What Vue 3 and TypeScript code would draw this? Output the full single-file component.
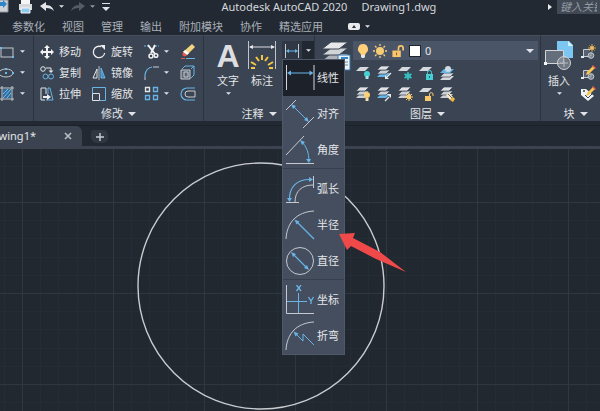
<script setup lang="ts">
import { ref } from 'vue'

interface Tool {
  icon: string
  label: string
}

const menus: string[] = ['参数化', '视图', '管理', '输出', '附加模块', '协作', '精选应用']

const drawTools: Tool[] = [
  { icon: 'rect', label: '矩形' },
  { icon: 'ellipse', label: '椭圆' },
  { icon: 'hatch', label: '图案填充' },
]

const modifyTools: Tool[][] = [
  [
    { icon: 'move', label: '移动' },
    { icon: 'copy', label: '复制' },
    { icon: 'stretch', label: '拉伸' },
  ],
  [
    { icon: 'rotate', label: '旋转' },
    { icon: 'mirror', label: '镜像' },
    { icon: 'scale', label: '缩放' },
  ],
]

const splitTools: Tool[] = [
  { icon: 'trim', label: '修剪' },
  { icon: 'fillet', label: '圆角' },
  { icon: 'array', label: '阵列' },
]

const editTools: Tool[] = [
  { icon: 'erase', label: '删除' },
  { icon: 'explode', label: '分解' },
  { icon: 'offset', label: '偏移' },
]

const layerTools: Tool[] = [
  { icon: 'l-off', label: '关' },
  { icon: 'l-iso', label: '隔离' },
  { icon: 'l-freeze', label: '冻结' },
  { icon: 'l-lock', label: '锁定' },
  { icon: 'l-current', label: '置为当前' },
  { icon: 'l-on', label: '打开所有图层' },
  { icon: 'l-uniso', label: '取消隔离' },
  { icon: 'l-thaw', label: '解冻' },
  { icon: 'l-unlock', label: '解锁' },
  { icon: 'l-match', label: '匹配图层' },
]

const blockTools: Tool[] = [
  { icon: 'b-create', label: '创建' },
  { icon: 'b-edit', label: '编辑' },
  { icon: 'b-attr', label: '编辑属性' },
]

const dimensionGroups: Tool[][] = [
  [
    { icon: 'd-linear', label: '线性' },
    { icon: 'd-aligned', label: '对齐' },
    { icon: 'd-angular', label: '角度' },
  ],
  [
    { icon: 'd-arc', label: '弧长' },
    { icon: 'd-radius', label: '半径' },
    { icon: 'd-diameter', label: '直径' },
  ],
  [
    { icon: 'd-ordinate', label: '坐标' },
    { icon: 'd-jogged', label: '折弯' },
  ],
]

const selected = ref('线性')
const menuOpen = ref(true)
const layer = ref('0')
const query = ref('')

function choose(label: string) {
  selected.value = label
  menuOpen.value = false
}
</script>

<template>
  <div class="app">
    <svg class="sprite" aria-hidden="true">
      <symbol id="caret" viewBox="0 0 8 4"><path d="M0 0h8L4 4z" fill="#dfe2e6" /></symbol>

      <symbol id="export" viewBox="0 0 10 14">
        <path d="M0 0h8v12H0" fill="#cfd3d8" stroke="#8d949d" /><path d="M0 2h3V0l4 4-4 4V6H0z" fill="#2e86c8" />
      </symbol>
      <symbol id="print" viewBox="0 0 15 14">
        <path d="M3 0h9v4H3z" fill="#f5f5f5" /><path d="M1 4h13v6H1z" fill="#d6d9dc" /><path d="M3 8h9v5H3z" fill="#8ecbee" stroke="#f4f6f8" />
      </symbol>
      <symbol id="undo" viewBox="0 0 14 10">
        <path d="M6 0v3c5 0 7 3 8 6-2-2-4-3-8-3v3L0 4z" fill="currentColor" />
      </symbol>

      <symbol id="rect" viewBox="0 0 16 16">
        <rect x="1" y="4" width="12" height="9" fill="none" stroke="#c3c8ce" /><path d="M0 3h2v2H0zM12 12h2v2h-2z" fill="#6db9ec" />
      </symbol>
      <symbol id="ellipse" viewBox="0 0 16 16">
        <ellipse cx="6" cy="8" rx="7" ry="4" fill="none" stroke="#c3c8ce" /><path d="M5 7h2v2H5zM12 7h2v2h-2zM5 3h2v2H5z" fill="#6db9ec" />
      </symbol>
      <symbol id="hatch" viewBox="0 0 16 16">
        <path d="M3 3h8v9H3z" fill="#2f6d9f" /><path d="M3 8l5-5M3 12l8-9M7 12l4-5" stroke="#79c0ef" />
        <path d="M2 0v15M12 0v15M0 2h14M0 13h14" stroke="#c3c8ce" />
      </symbol>

      <symbol id="move" viewBox="0 0 14 14">
        <path d="M7 2v10M2 7h10" stroke="#f1f2f3" stroke-width="2" />
        <path d="M7 0l3 3H4zM7 14l3-3H4zM0 7l3-3v6zM14 7l-3-3v6z" fill="#f1f2f3" />
      </symbol>
      <symbol id="copy" viewBox="0 0 14 14">
        <circle cx="3" cy="3" r="2.3" fill="none" stroke="#e4e6e8" />
        <path d="M6 2h5v3" fill="none" stroke="#e4e6e8" /><path d="M8.500 4.500h5L11 7z" fill="#e4e6e8" />
        <circle cx="5.500" cy="10.500" r="2.500" fill="none" stroke="#69b4e6" /><circle cx="11" cy="10.500" r="2.500" fill="none" stroke="#69b4e6" />
      </symbol>
      <symbol id="stretch" viewBox="0 0 14 14">
        <path d="M6 7V1H1v12h4" fill="none" stroke="#dfe2e5" />
        <path d="M8 7V1h2l3 12H6" fill="none" stroke="#69b4e6" />
        <path d="M3 9h4V7l4 3-4 3v-2H3z" fill="#eceef0" />
      </symbol>
      <symbol id="rotate" viewBox="0 0 14 14">
        <path d="M9 1.600A5.700 5.700 0 1 0 12.700 8" fill="none" stroke="#eceef0" stroke-width="1.300" />
        <path d="M8 0h5v5z" fill="#eceef0" />
      </symbol>
      <symbol id="mirror" viewBox="0 0 14 14">
        <path d="M5 3v9H1z" fill="none" stroke="#e4e6e8" /><path d="M9 2l4 10H9z" fill="#3d8dc4" stroke="#69b4e6" /><path d="M7 0v14" stroke="#b4bac1" />
      </symbol>
      <symbol id="scale" viewBox="0 0 14 14">
        <path d="M.5 6V.5h13v13H8" fill="none" stroke="#69b4e6" /><path d="M.5 6.500h7v7h-7z" fill="none" stroke="#dfe2e5" />
      </symbol>
      <symbol id="trim" viewBox="0 0 16 16">
        <path d="M0 2h5M11 2h4" stroke="#69b4e6" stroke-dasharray="2 1" />
        <path d="M4 1l7 9M11 1L7 9" stroke="#f1f2f3" stroke-width="2" />
        <circle cx="7" cy="12" r="2" fill="none" stroke="#f1f2f3" stroke-width="1.500" /><circle cx="12" cy="11.500" r="1.800" fill="none" stroke="#f1f2f3" stroke-width="1.500" />
      </symbol>
      <symbol id="fillet" viewBox="0 0 16 16">
        <path d="M1 12V10Q2 3 8 2" fill="none" stroke="#69b4e6" stroke-width="1.200" /><path d="M9 2h6M1 12v3" stroke="#c8ccd1" />
      </symbol>
      <symbol id="array" viewBox="0 0 16 16">
        <path d="M1.500 1.500h4v4h-4z" fill="none" stroke="#e4e6e8" stroke-width="1.300" />
        <path d="M9.500 1.500h4v4h-4zM1.500 9.500h4v4h-4zM9.500 9.500h4v4h-4z" fill="none" stroke="#69b4e6" stroke-width="1.300" />
      </symbol>
      <symbol id="erase" viewBox="0 0 16 16">
        <path d="M12 0l3 3-8 8-4-3z" fill="#f4d583" /><path d="M5 6l4 3-2 2-4-3z" fill="#fff" /><path d="M3 8l4 3c-2 3-6 1-4-3z" fill="#e65b52" />
        <path d="M1 14.500h4" stroke="#e65b52" /><path d="M6 14.500h9" stroke="#69b4e6" />
      </symbol>
      <symbol id="explode" viewBox="0 0 16 16">
        <path d="M1 5h9v9H1zM4 7h4v5H4z" fill="#5c6675" stroke="#c8ccd1" />
        <path d="M2 4l3-3h9v9l-3 3M11 4l3-3" fill="none" stroke="#69b4e6" />
      </symbol>
      <symbol id="offset" viewBox="0 0 16 16">
        <path d="M15 2H7a6 6 0 0 0 0 12h8" fill="none" stroke="#69b4e6" stroke-width="1.200" />
        <path d="M15 5H8a3 3 0 0 0 0 6h7z" fill="none" stroke="#c8ccd1" />
      </symbol>

      <symbol id="dimension" viewBox="0 0 30 30">
        <path d="M1.500 0v28M28.500 0v28" stroke="#c0c5cc" /><path d="M3 6h24" stroke="#d9dce0" />
        <path d="M2 6l4-2v4zM28 6l-4-2v4z" fill="#e6e8ea" />
        <path d="M15 14v5M9 16l3 4M21 16l-3 4M4 21l5 3M26 21l-5 3M4 27h4M22 27h4" stroke="#f6c544" stroke-width="2" />
      </symbol>
      <symbol id="dim-small" viewBox="0 0 16 16">
        <path d="M1.500 1v14M14.500 1v14" stroke="#c5cad0" /><path d="M3 8h10" stroke="#69b4e6" /><path d="M2 8l3-2v4zM14 8l-3-2v4z" fill="#69b4e6" />
      </symbol>
      <symbol id="layers" viewBox="0 0 30 30">
        <path d="M1 20L10 13h17l-9 7z" fill="#aeb3b9" /><path d="M1 14L10 7h17l-9 7z" fill="#d1d4d7" stroke="#3d4553" />
        <path d="M1 8L10 1h17l-9 7z" fill="#e7e8e9" stroke="#3d4553" />
        <path d="M17 14h12v15H17z" fill="#edf3f7" stroke="#3578a9" /><path d="M20 17h7" stroke="#2f89cc" stroke-width="2" /><path d="M20 21h7M20 24h7" stroke="#75879a" />
      </symbol>

      <symbol id="bulb" viewBox="0 0 12 16">
        <path d="M6 1a5 5 0 0 0-3 9l1 2h4l1-2a5 5 0 0 0-3-9z" fill="#ffd079" /><path d="M4 12h4v2l-1 1H5l-1-1z" fill="#e4e6e8" />
      </symbol>
      <symbol id="sun" viewBox="0 0 14 14">
        <circle cx="7" cy="7" r="4" fill="#f8cc75" /><path d="M7 0v2M7 12v2M0 7h2M12 7h2M2 2l1.500 1.500M10.500 10.500L12 12M12 2l-1.500 1.500M2 12l1.500-1.500" stroke="#f8cc75" stroke-width="1.300" />
      </symbol>
      <symbol id="unlock" viewBox="0 0 14 15">
        <path d="M1 7h9v7H1z" fill="#fac66a" /><path d="M7.500 7V4.500a2.500 2.500 0 0 1 5 0V7" fill="none" stroke="#fac66a" stroke-width="1.800" /><path d="M5 9h1v3H5z" fill="#6b5633" />
      </symbol>

      <symbol id="sheet" viewBox="0 0 16 16"><path d="M1 6l4-4h9l-4 4z" fill="#d5d8dc" /></symbol>
      <symbol id="stack" viewBox="0 0 16 16">
        <path d="M1 12l4-4h9l-4 4z" fill="#cdd1d6" /><path d="M1 9l4-4h9l-4 4z" fill="#cdd1d6" stroke="#3b4452" stroke-width=".7" /><path d="M1 5l4-4h9l-4 4z" fill="#dfe1e4" stroke="#3b4452" stroke-width=".7" />
      </symbol>
      <symbol id="stack-blue" viewBox="0 0 16 16">
        <path d="M1 12l4-4h9l-4 4z" fill="#65b5e7" /><path d="M1 9l4-4h9l-4 4z" fill="#cdd1d6" stroke="#3b4452" stroke-width=".7" /><path d="M1 5l4-4h9l-4 4z" fill="#dfe1e4" stroke="#3b4452" stroke-width=".7" />
      </symbol>
      <symbol id="l-off" viewBox="0 0 16 16">
        <use href="#sheet" /><circle cx="12" cy="9" r="3" fill="#45d0d3" /><path d="M10.500 11h3v3h-3z" fill="#a8e6e6" />
      </symbol>
      <symbol id="l-iso" viewBox="0 0 16 16"><use href="#stack-blue" /><path d="M15 8l-4 4" stroke="#e6e8ea" stroke-width="1.300" /><path d="M9 10v4h4z" fill="#e6e8ea" /></symbol>
      <symbol id="l-freeze" viewBox="0 0 16 16">
        <use href="#sheet" /><path d="M11 7v8M7.500 9l7 4M14.500 9l-7 4" stroke="#35bfc0" stroke-width="1.500" /><circle cx="11" cy="11" r="2.300" fill="none" stroke="#35bfc0" />
      </symbol>
      <symbol id="l-lock" viewBox="0 0 16 16">
        <use href="#sheet" /><path d="M8 9h7v6H8z" fill="#45d0d3" /><path d="M9.500 9V7.500a2 2 0 0 1 4 0V9" fill="none" stroke="#45d0d3" /><path d="M11 11h1v2h-1z" fill="#1e6568" />
      </symbol>
      <symbol id="l-current" viewBox="0 0 16 16">
        <path d="M1 15l4-4h10l-4 4z" fill="#d5d8dc" /><path d="M1 12l4-4h10l-4 4z" fill="#d5d8dc" stroke="#3b4452" stroke-width=".7" /><path d="M1 8l4-4h10l-4 4z" fill="#65b5e7" /><circle cx="9" cy="4" r="3" fill="#d0dbe5" />
      </symbol>
      <symbol id="l-on" viewBox="0 0 16 16"><use href="#stack" /><circle cx="12" cy="9" r="3" fill="#fbd174" /><path d="M10.500 12h3v3h-3z" fill="#f2dfb5" /></symbol>
      <symbol id="l-uniso" viewBox="0 0 16 16"><use href="#stack-blue" /><path d="M9 15l4-4" stroke="#e6e8ea" stroke-width="1.300" /><path d="M11 8h4v4z" fill="#e6e8ea" /></symbol>
      <symbol id="l-thaw" viewBox="0 0 16 16">
        <use href="#stack" /><circle cx="12" cy="11" r="2.200" fill="#f9cd70" /><path d="M12 7v8M8 11h8M9 8l6 6M15 8l-6 6" stroke="#f9cd70" />
      </symbol>
      <symbol id="l-unlock" viewBox="0 0 16 16">
        <use href="#sheet" /><path d="M7 10h6v5H7z" fill="#fac66a" /><path d="M11.500 10V8a1.800 1.800 0 0 1 3.500 0v2" fill="none" stroke="#fac66a" />
      </symbol>
      <symbol id="l-match" viewBox="0 0 16 16"><use href="#stack" /><path d="M7 9l3-2 4 4-3 3z" fill="#f7ecd0" /><path d="M11 14l3-3 2 2-2 3z" fill="#f4b740" /><path d="M9 8l4 4" stroke="#7d6840" /></symbol>

      <symbol id="insert" viewBox="0 0 30 30">
        <path d="M13 0h12l4 4v13H13z" fill="#7cc6f2" /><path d="M24 0v5h5z" fill="#d7effc" />
        <path d="M1.500 9.500h18v13h-18z" fill="#656e7b" stroke="#d2d5d9" /><circle cx="20" cy="22" r="6.500" fill="#929aa5" fill-opacity=".6" stroke="#d2d5d9" />
        <path d="M20 18v8M16 22h8" stroke="#b7bcc3" /><path d="M0 21h3v3H0z" fill="#f5f5f5" />
      </symbol>
      <symbol id="b-base" viewBox="0 0 16 16">
        <path d="M10 5.500H3.500v7H8" fill="#566070" stroke="#c8ccd1" /><circle cx="11" cy="11.500" r="2.800" fill="#737c89" stroke="#c8ccd1" /><path d="M1 12h3v2H1z" fill="#e6e8ea" /><path d="M11 9v3H8.500" fill="none" stroke="#c8ccd1" stroke-width=".7" />
      </symbol>
      <symbol id="b-create" viewBox="0 0 16 16"><use href="#b-base" /><circle cx="12" cy="4" r="1.800" fill="#ffd36f" /><path d="M12 0v8M8 4h8M9.500 1.500l5 5M14.500 1.500l-5 5" stroke="#f7bc52" stroke-width=".8" /></symbol>
      <symbol id="pencil" viewBox="0 0 16 16"><path d="M13 1l2 2-6 6-3 1 1-3z" fill="#f6c650" /><path d="M13 0l3 3-1 1-3-3z" fill="#e95d4e" /></symbol>
      <symbol id="b-edit" viewBox="0 0 16 16"><use href="#b-base" /><use href="#pencil" /></symbol>
      <symbol id="b-attr" viewBox="0 0 16 16"><path d="M1 3h5l8 7-6 5-7-6z" fill="#f0f1f2" /><circle cx="4" cy="5" r="1" fill="#3b4452" /><path d="M5 9l3 3 5-5" fill="none" stroke="#3b4452" /><use href="#pencil" /></symbol>

      <symbol id="d-linear" viewBox="0 0 30 30">
        <path d="M1.500 2v25M29 2v25" stroke="#d3d6da" /><path d="M4 10h22" stroke="#69b4e6" /><path d="M2 10l4-2.500v5zM28.500 10l-4-2.500v5z" fill="#69b4e6" />
      </symbol>
      <symbol id="d-aligned" viewBox="0 0 30 30">
        <path d="M1 11L11 1M18 29l11-11" stroke="#c6cad0" /><path d="M8 7l14 14" stroke="#69b4e6" /><path d="M6 5l5 2-3 3zM24 23l-5-2 3-3z" fill="#69b4e6" />
      </symbol>
      <symbol id="d-angular" viewBox="0 0 30 30">
        <path d="M1 20L19 1M1 28.500h28" stroke="#c6cad0" /><path d="M17 7q7 7 7 19" fill="none" stroke="#69b4e6" /><path d="M15 5l5 2-3 3zM24 28l-3-4h5z" fill="#69b4e6" />
      </symbol>
      <symbol id="d-arc" viewBox="0 0 30 30">
        <path d="M28.500 2v12M1 28.500h13M10 28c0-11 7-17 18-17" fill="none" stroke="#c6cad0" /><path d="M4.500 26C4 13 12 5 26 5.500" fill="none" stroke="#69b4e6" stroke-width="1.200" /><path d="M28 5.500l-4-2.500v5zM4.500 28l-2.500-4h5z" fill="#69b4e6" />
      </symbol>
      <symbol id="d-radius" viewBox="0 0 30 30">
        <path d="M1 29C2 12 12 2 29 1" fill="none" stroke="#c6cad0" /><path d="M12 12l17 17" stroke="#69b4e6" stroke-width="1.200" /><path d="M9.500 9.500l5 2-3 3z" fill="#69b4e6" />
      </symbol>
      <symbol id="d-diameter" viewBox="0 0 30 30">
        <circle cx="15" cy="15" r="13.500" fill="none" stroke="#c6cad0" /><path d="M8 8l14 14" stroke="#69b4e6" stroke-width="1.200" /><path d="M6 6l5 2-3 3zM24 24l-5-2 3-3z" fill="#69b4e6" />
      </symbol>
      <symbol id="d-ordinate" viewBox="0 0 30 30">
        <path d="M1.500 0v28.500H29" fill="none" stroke="#c6cad0" /><path d="M13.500 8v20M2 16.500h20" stroke="#69b4e6" />
        <path d="M11.500 0l4.500 6M16 0l-4.500 6M23.500 12l2.500 4 2.500-4M26 16v3" fill="none" stroke="#69b4e6" stroke-width="1.300" />
      </symbol>
      <symbol id="d-jogged" viewBox="0 0 30 30">
        <path d="M1 29C2 12 12 2 29 1" fill="none" stroke="#c6cad0" /><path d="M11 13l7 7v-7l11 11" fill="none" stroke="#69b4e6" /><path d="M8.500 10.500l5 2-3 3z" fill="#69b4e6" />
      </symbol>
    </svg>

    <header class="titlebar">
      <div class="quick">
        <button aria-label="输出"><svg class="export"><use href="#export" /></svg></button>
        <button aria-label="打印"><svg class="print"><use href="#print" /></svg></button>
        <button class="history" aria-label="放弃">
          <svg class="undo"><use href="#undo" /></svg><svg class="caret"><use href="#caret" /></svg>
        </button>
        <button class="history off" aria-label="重做">
          <svg class="undo flip"><use href="#undo" /></svg><svg class="caret"><use href="#caret" /></svg>
        </button>
        <button class="customize" aria-label="自定义"><svg class="caret wide"><use href="#caret" /></svg></button>
      </div>
      <h1><span>Autodesk AutoCAD 2020</span><span>Drawing1.dwg</span></h1>
      <form class="search" @submit.prevent>
        <svg class="play" viewBox="0 0 4 6"><path d="M0 0l4 3-4 3z" fill="#e8eaec" /></svg>
        <input v-model="query" type="text" aria-label="搜索" placeholder="键入关键字或短语" />
      </form>
    </header>

    <nav class="menubar">
      <a v-for="m in menus" :key="m" href="#">{{ m }}</a>
      <button class="minimize" aria-label="最小化">
        <svg class="pill" viewBox="0 0 12 7"><rect width="12" height="7" rx="2" fill="#e9eaec" /><path d="M4 5l2-3 2 3z" fill="#2a313b" /></svg>
        <svg class="caret"><use href="#caret" /></svg>
      </button>
    </nav>

    <main class="ribbon">
      <section class="panel draw">
        <div class="tools column">
          <button v-for="t in drawTools" :key="t.icon" class="split" :aria-label="t.label">
            <svg class="i16"><use :href="'#' + t.icon" /></svg><svg class="caret"><use href="#caret" /></svg>
          </button>
        </div>
      </section>

      <section class="panel modify">
        <div class="tools">
          <div v-for="(col, i) in modifyTools" :key="i" class="column">
            <button v-for="t in col" :key="t.icon" class="labelled">
              <svg class="i14"><use :href="'#' + t.icon" /></svg>{{ t.label }}
            </button>
          </div>
          <div class="column">
            <button v-for="t in splitTools" :key="t.icon" class="split" :aria-label="t.label">
              <svg class="i16"><use :href="'#' + t.icon" /></svg><svg class="caret"><use href="#caret" /></svg>
            </button>
          </div>
          <div class="column">
            <button v-for="t in editTools" :key="t.icon" :aria-label="t.label">
              <svg class="i16"><use :href="'#' + t.icon" /></svg>
            </button>
          </div>
        </div>
        <button class="panel-title">修改<svg class="caret wide"><use href="#caret" /></svg></button>
      </section>

      <section class="panel annotate">
        <div class="tools">
          <button class="big">
            <span class="letter">A</span>文字<svg class="caret"><use href="#caret" /></svg>
          </button>
          <button class="big">
            <svg class="i30"><use href="#dimension" /></svg>标注
          </button>
          <div class="dropdown">
            <button class="dropdown-toggle" aria-label="标注类型" :aria-expanded="menuOpen" @click="menuOpen = !menuOpen">
              <svg class="i16"><use href="#dim-small" /></svg>
              <span class="toggle-caret"><svg class="caret"><use href="#caret" /></svg></span>
            </button>
            <div v-if="menuOpen" class="flyout">
              <div v-for="(group, i) in dimensionGroups" :key="i" class="flyout-group">
                <button
                  v-for="t in group"
                  :key="t.icon"
                  class="flyout-item"
                  :class="{ active: t.label === selected }"
                  @click="choose(t.label)"
                >
                  <svg class="i30"><use :href="'#' + t.icon" /></svg>{{ t.label }}
                </button>
              </div>
            </div>
          </div>
        </div>
        <button class="panel-title">注释<svg class="caret wide"><use href="#caret" /></svg></button>
      </section>

      <section class="panel layer">
        <div class="tools">
          <button class="big" aria-label="图层特性"><svg class="i30"><use href="#layers" /></svg></button>
          <div class="layer-body">
            <label class="combo">
              <svg class="bulb"><use href="#bulb" /></svg>
              <svg class="i14"><use href="#sun" /></svg>
              <svg class="i14"><use href="#unlock" /></svg>
              <span class="swatch"></span>
              <select v-model="layer" aria-label="图层"><option>0</option></select>
              <svg class="caret wide"><use href="#caret" /></svg>
            </label>
            <div class="layer-grid">
              <button v-for="t in layerTools" :key="t.icon" :aria-label="t.label">
                <svg class="i16"><use :href="'#' + t.icon" /></svg>
              </button>
            </div>
          </div>
        </div>
        <button class="panel-title">图层<svg class="caret wide"><use href="#caret" /></svg></button>
      </section>

      <section class="panel block">
        <div class="tools">
          <button class="big">
            <svg class="i30"><use href="#insert" /></svg>插入<svg class="caret"><use href="#caret" /></svg>
          </button>
          <div class="column">
            <button v-for="t in blockTools" :key="t.icon" :aria-label="t.label">
              <svg class="i16"><use :href="'#' + t.icon" /></svg>
            </button>
          </div>
        </div>
        <button class="panel-title">块<svg class="caret wide"><use href="#caret" /></svg></button>
      </section>
    </main>

    <div class="filetabs">
      <div class="filetab">
        <span class="filename">Drawing1*</span>
        <button aria-label="关闭">
          <svg class="close" viewBox="0 0 8 8"><path d="M1 1l6 6M7 1L1 7" stroke="#b9bec5" stroke-width="1.600" /></svg>
        </button>
      </div>
      <button class="newtab" aria-label="新建">
        <svg class="close" viewBox="0 0 8 8"><path d="M4 0v8M0 4h8" stroke="#c9cdd2" stroke-width="1.400" /></svg>
      </button>
    </div>

    <div class="canvas">
      <svg class="drawing">
        <defs>
          <pattern id="grid" x="22" y="53" width="91" height="91" patternUnits="userSpaceOnUse">
            <path d="M18.500 0v91M36.500 0v91M55.500 0v91M73.500 0v91M0 18.500h91M0 36.500h91M0 55.500h91M0 73.500h91" stroke="#242c35" />
            <path d="M.5 0v91M0 .5h91" stroke="#2f3740" />
          </pattern>
        </defs>
        <rect width="100%" height="100%" fill="url(#grid)" />
        <circle cx="261" cy="137" r="123" fill="none" stroke="#c9ccd0" stroke-width="1.400" />
      </svg>
      <svg class="pointer" viewBox="0 0 70 42">
        <path d="M1 2l16-1-2 5 27 14 26 20-30-13-25-13-4 4z" fill="#f0494a" />
      </svg>
    </div>
  </div>
</template>

<style>
html,
body {
  margin: 0;
  background: #212830;
}
</style>

<style scoped>
.app {
  display: flex;
  flex-direction: column;
  min-height: 100vh;
  overflow: hidden;
  background: #222933;
  color: #e4e6e9;
  font: 11px/16px "Noto Sans", "Noto Sans CJK SC", sans-serif;
}
.sprite {
  position: absolute;
  width: 0;
  height: 0;
}
button {
  display: flex;
  align-items: center;
  margin: 0;
  padding: 0;
  border: 0;
  background: none;
  color: inherit;
  font: inherit;
  white-space: nowrap;
}
svg {
  display: block;
  flex: none;
}
.i14 { width: 14px; height: 14px; }
.i16 { width: 16px; height: 16px; }
.i30 { width: 30px; height: 30px; }
.caret { width: 5px; height: 3px; }
.caret.wide { width: 8px; height: 4px; }

.titlebar {
  display: flex;
  align-items: flex-start;
  height: 18px;
}
.quick {
  display: flex;
  align-items: center;
  flex: 222 1 0;
  height: 13px;
}
.export { width: 10px; height: 14px; }
.print { width: 15px; height: 14px; margin-left: 8px; }
.history { gap: 5px; margin-left: 7px; color: #e3e5e8; }
.history.off { color: #535b66; }
.history.off .caret { opacity: 0.6; }
.undo { width: 14px; height: 10px; }
.flip { transform: scaleX(-1); }
.customize {
  margin-left: 7px;
  padding-top: 3px;
  border-top: 1px solid #dfe2e6;
}
h1 {
  display: flex;
  gap: 14px;
  margin: 0;
  color: #d5d8dc;
  font: 11px/15px "Noto Sans", sans-serif;
  height: 15px;
  margin-top: -1px;
  white-space: nowrap;
}
.search {
  display: flex;
  align-items: center;
  justify-content: flex-end;
  flex: 164 1 0;
  height: 14px;
  gap: 5px;
}
.play { width: 4px; height: 6px; }
.search input {
  box-sizing: border-box;
  width: 43px;
  height: 14px;
  padding: 0 3px;
  border: 0;
  background: #414955;
  color: #e4e6e9;
  font: italic 11px/14px "Noto Sans", "Noto Sans CJK SC", sans-serif;
}
.search input::placeholder { color: #939aa3; }

.menubar {
  display: flex;
  align-items: center;
  gap: 17px;
  height: 17px;
  padding-left: 12px;
}
.menubar a {
  color: #a9afb7;
  text-decoration: none;
  white-space: nowrap;
}
.minimize { gap: 5px; margin-left: 8px; }
.pill { width: 12px; height: 7px; }

.ribbon {
  display: flex;
  height: 86px;
  background: #3b4452;
}
.panel {
  display: flex;
  flex-direction: column;
  flex: none;
  box-sizing: border-box;
  padding-top: 5px;
  border-top: 1px solid #454e5c;
  border-right: 1px solid #2d343f;
}
.tools {
  display: flex;
  flex: 1;
}
.column {
  display: flex;
  flex-direction: column;
}
.column button { height: 21px; }
.split { gap: 4px; }
.labelled { gap: 5px; }
.panel-title {
  align-self: center;
  gap: 5px;
  height: 14px;
}
.draw { width: 34px; }
.modify .tools { gap: 11px; padding: 0 7px 0 6px; }
.annotate .tools { gap: 2px; padding-left: 8px; }
.big {
  flex-direction: column;
  width: 32px;
  height: 55px;
  gap: 2px;
}
.big .caret { margin-top: 1px; }
.letter {
  height: 30px;
  color: #dcdee1;
  font: bold 32px/30px "Liberation Sans", sans-serif;
}
.dropdown {
  position: relative;
  margin-left: 2px;
}
.dropdown-toggle {
  width: 32px;
  height: 19px;
  padding-left: 2px;
  box-sizing: border-box;
  gap: 2px;
  background: #303845;
}
.toggle-caret {
  display: flex;
  align-items: center;
  justify-content: center;
  flex: 1;
  height: 19px;
  background: #222832;
}
.flyout {
  position: absolute;
  top: 18px;
  left: 0;
  z-index: 2;
  box-sizing: border-box;
  width: 63px;
  border: 1px solid #4d586a;
  background: #444e5f;
}
.flyout-group + .flyout-group {
  border-top: 1px solid #363f4c;
  padding-top: 2px;
}
.flyout-item {
  width: 100%;
  height: 36px;
  gap: 2px;
  padding-left: 2px;
}
.flyout-item.active { background: #1d222a; }

.layer { flex: 1; }
.layer .tools { gap: 1px; padding: 0 2px 0 5px; }
.layer-body { flex: 1; }
.combo {
  display: flex;
  align-items: center;
  gap: 4px;
  box-sizing: border-box;
  height: 19px;
  padding: 0 4px;
  background: #4a5567;
}
.bulb { width: 12px; height: 16px; }
.swatch {
  width: 10px;
  height: 10px;
  border: 1px solid #20262e;
  background: #fff;
}
.combo select {
  flex: 1;
  min-width: 0;
  height: 16px;
  padding: 0;
  border: 0;
  appearance: none;
  background: none;
  color: inherit;
  font: 11px/16px "Noto Sans", sans-serif;
}
.layer-grid {
  display: grid;
  grid-template-columns: repeat(5, 21px);
  grid-auto-rows: 21px;
  padding: 2px 0 0 2px;
}
.block {
  width: 70px;
  margin-right: -11px;
}
.block .tools { gap: 5px; padding-left: 2px; }

.filetabs {
  display: flex;
  align-items: flex-end;
  gap: 9px;
  height: 24px;
  border-top: 1px solid #1c222a;
  border-bottom: 3px solid #3b4350;
  box-sizing: border-box;
  margin-top: 4px;
}
.filetab {
  display: flex;
  align-items: center;
  justify-content: flex-end;
  gap: 28px;
  box-sizing: border-box;
  width: 82px;
  height: 20px;
  padding-right: 10px;
  border-radius: 0 6px 0 0;
  background: #3b4350;
}
.close { width: 8px; height: 8px; }
.newtab {
  justify-content: center;
  width: 17px;
  height: 13px;
  margin-bottom: 3px;
  border-radius: 3px 5px 5px 6px;
  background: #303741;
}

.canvas {
  position: relative;
  flex: 1;
  background: #212830;
}
.drawing {
  position: absolute;
  width: 100%;
  height: 100%;
}
.pointer {
  position: absolute;
  top: 83px;
  left: 338px;
  z-index: 3;
  width: 70px;
  height: 42px;
}
</style>
